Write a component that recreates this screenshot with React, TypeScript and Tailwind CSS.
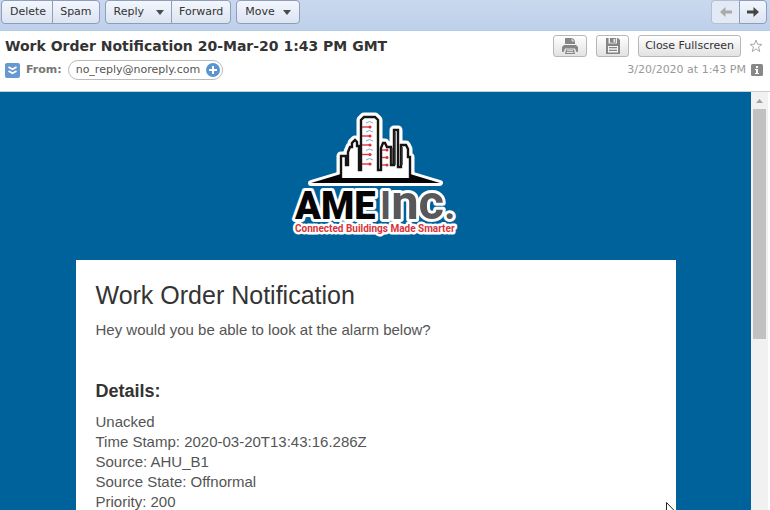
import { ReactNode } from "react"

const details = [
  "Unacked",
  "Time Stamp: 2020-03-20T13:43:16.286Z",
  "Source: AHU_B1",
  "Source State: Offnormal",
  "Priority: 200",
]

const skyline =
  "M50 68V46H55V55H57V42L59 37H61V33L64 30L66 32V36H68V60H70V10L73 7H84L87 10V60H90V38L92 33H94L96 37H100V55H103V20H107V57H110V35H115L117 39V47H119V68"
const base = "M20 73L50 64V68H119V64L149 73Z"

function ToolButton({ children, className = "" }: { children: ReactNode; className?: string }) {
  return (
    <button
      type="button"
      className={`flex h-6 items-center border border-[#8d9dbb] bg-linear-to-b from-[#f3f7fd] to-[#dce4f2] ${className}`}
    >
      {children}
    </button>
  )
}

function GreyButton({ children, label, className = "" }: { children: ReactNode; label?: string; className?: string }) {
  return (
    <button
      type="button"
      aria-label={label}
      className={`flex h-[22px] items-center justify-center rounded-[3px] border border-[#b8b8b8] bg-linear-to-b from-white to-[#e2e2e2] text-[#333] ${className}`}
    >
      {children}
    </button>
  )
}

function Caret() {
  return (
    <svg width="8" height="5" viewBox="0 0 8 5" aria-hidden="true">
      <path d="M0 0H8L4 5Z" fill="#4a4a4a" />
    </svg>
  )
}

function Arrow({ className }: { className: string }) {
  return (
    <svg width="12" height="10" viewBox="0 0 12 10" aria-hidden="true" className={className}>
      <path d="M0 3.5H6.5V0L12 5L6.5 10V6.5H0Z" fill="currentColor" />
    </svg>
  )
}

function Toolbar() {
  return (
    <div className="flex h-[31px] shrink-0 justify-between border-b border-[#b7cce8] bg-linear-to-b from-[#cad8ee] to-[#bed0ea] pr-[3px] pl-px">
      <div className="flex gap-[5px]">
        <div className="flex">
          <ToolButton className="rounded-l-sm pr-1.5 pl-2">Delete</ToolButton>
          <ToolButton className="-ml-px rounded-r-sm px-[7px]">Spam</ToolButton>
        </div>
        <div className="flex">
          <ToolButton className="gap-3 rounded-l-sm pr-[7px] pl-2">
            Reply <Caret />
          </ToolButton>
          <ToolButton className="-ml-px rounded-r-sm px-[7px]">Forward</ToolButton>
        </div>
        <ToolButton className="gap-2 rounded-sm px-2">
          Move <Caret />
        </ToolButton>
      </div>
      <div className="flex">
        <button
          type="button"
          aria-label="Previous message"
          className="flex h-6 w-7 items-center justify-center rounded-l-sm border border-r-0 border-[#b4bfd3] bg-[#e3eaf6]"
        >
          <Arrow className="rotate-180 text-[#aaa]" />
        </button>
        <button
          type="button"
          aria-label="Next message"
          className="flex h-6 w-7 items-center justify-center rounded-r-sm border border-[#8d9dbb] bg-linear-to-b from-[#f3f7fd] to-[#dce4f2]"
        >
          <Arrow className="text-[#444]" />
        </button>
      </div>
    </div>
  )
}

function MessageHeader() {
  return (
    <header className="shrink-0 border-b border-[#c8ced6] bg-white pt-1 pr-[7px] pb-[11px] pl-[5px]">
      <div className="flex h-[22px] items-center justify-between">
        <h1 className="text-sm font-bold text-[#333]">Work Order Notification 20-Mar-20 1:43 PM GMT</h1>
        <div className="flex items-center">
          <GreyButton label="Print" className="mr-[9px] w-[34px]">
            <svg width="16" height="16" viewBox="0 0 16 16" fill="#858585" aria-hidden="true">
              <path d="M3 0H10.5L13 2.5V6H3Z" />
              <path d="M10 0.5V3H12.5" fill="none" stroke="#fff" strokeWidth="0.8" />
              <path d="M2 7H14L16 9V14H14.5L13 10.5H3L1.5 14H0V9Z" />
              <path d="M4 11.5H12L13 16H3Z" />
              <path d="M5 12.7H11M4.5 14.5H11.5" stroke="#fff" strokeWidth="0.8" />
            </svg>
          </GreyButton>
          <GreyButton label="Save" className="mr-[9px] w-[33px]">
            <svg width="16" height="16" viewBox="0 0 16 16" fill="#858585" aria-hidden="true">
              <path d="M1 0H13L15 2V16H1Z" />
              <path d="M3.5 0V5.5H12V0" fill="#eee" />
              <path d="M5 0H10.8V4.7H5Z" />
              <path d="M8.5 1H10V4H8.5Z" fill="#eee" />
              <path d="M3 8H13V14.5H3Z" fill="#f5f5f5" />
              <path d="M4 9.7H12M4 12.3H12" stroke="#858585" strokeWidth="1.2" />
            </svg>
          </GreyButton>
          <GreyButton className="px-1.5">Close Fullscreen</GreyButton>
          <button type="button" aria-label="Flag message" className="ml-2">
            <svg width="14" height="14" viewBox="0 0 14 14" aria-hidden="true">
              <path
                d="M7 1L8.6 5.3H13L9.5 8L10.8 12.6L7 9.9L3.2 12.6L4.5 8L1 5.3H5.4Z"
                fill="#fff"
                stroke="#aaa"
              />
            </svg>
          </button>
        </div>
      </div>
      <div className="mt-[3px] flex items-center justify-between">
        <div className="flex items-center">
          <button type="button" aria-label="Expand header" className="size-[15px] rounded-xs bg-[#6699cf]">
            <svg width="15" height="15" viewBox="0 0 15 15" fill="none" stroke="#fff" strokeWidth="1.7" aria-hidden="true">
              <path d="M3.5 4L7.5 6.3L11.5 4M3.5 8L7.5 10.3L11.5 8" />
            </svg>
          </button>
          <span className="ml-1.5 font-bold text-[#777]">From:</span>
          <button
            type="button"
            className="ml-1.5 flex h-5 items-center gap-1.5 rounded-full border border-[#bbb] bg-white pr-0.5 pl-[7px] text-[#555]"
          >
            no_reply@noreply.com
            <svg width="14" height="14" viewBox="0 0 14 14" aria-hidden="true">
              <circle cx="7" cy="7" r="7" fill="#5b94d0" />
              <path d="M7 3V11M3 7H11" stroke="#fff" strokeWidth="2" />
            </svg>
          </button>
        </div>
        <div className="flex items-center gap-[5px] text-[#999]">
          <time dateTime="2020-03-20T13:43">3/20/2020 at 1:43 PM</time>
          <svg width="12" height="12" viewBox="0 0 12 12" aria-hidden="true">
            <rect width="12" height="12" rx="1.5" fill="#888" />
            <path d="M5 2H7V4H5ZM4 5H7V9H8V10H4V9H5V6H4Z" fill="#fff" />
          </svg>
        </div>
      </div>
    </header>
  )
}

function Logo() {
  return (
    <svg width="170" height="130" viewBox="0 0 170 130" role="img" aria-label="AME Inc." className="mx-auto block">
      <g fill="#fff" stroke="#fff" strokeWidth="9" strokeLinejoin="round">
        <path d={skyline} />
        <path d={base} strokeWidth="6" />
      </g>
      <path d={skyline} fill="#fff" stroke="#151515" strokeWidth="2.4" />
      <path d="M104 22V55M111 37V55M101 38V54" stroke="#333" strokeWidth="1.4" />
      <path d={base} fill="#050505" />
      {[17, 26, 35, 44.5, 54].map((y) => (
        <g key={y}>
          <path d={`M75 ${y - 4}Q78.500 ${y - 7} 82 ${y - 4}`} fill="none" stroke="#7fa9c9" />
          <path d={`M71 ${y}H79`} stroke="#d9343b" strokeWidth="1.4" />
          <circle cx="79" cy={y} r="1.6" fill="#d9343b" />
        </g>
      ))}
      {[40, 47.5, 55].map((y) => (
        <g key={y}>
          <path d={`M91 ${y}H96`} stroke="#d9343b" strokeWidth="1.4" />
          <circle cx="96" cy={y} r="1.5" fill="#d9343b" />
        </g>
      ))}
      {/* white halo is painted under the letters */}
      <g
        fontFamily="Roboto, sans-serif"
        fontWeight="700"
        stroke="#fff"
        strokeWidth="6"
        strokeLinejoin="round"
        paintOrder="stroke"
      >
        <text x="89" y="109" fontSize="38" fill="#58585a">
          I<tspan fontSize="49">nc</tspan>.
        </text>
        <text x="4" y="109" fontSize="38" fontWeight="900" fill="#050505">
          AME
        </text>
        <text x="4" y="122" fontSize="10" strokeWidth="5" fill="#d9343b">
          Connected Buildings Made Smarter
        </text>
      </g>
    </svg>
  )
}

function Scrollbar() {
  return (
    <div className="mr-0.5 w-[17px] shrink-0 bg-[#f1f1f1] px-0.5" aria-hidden="true">
      <div className="flex h-[17px] items-center justify-center">
        <svg width="7" height="4" viewBox="0 0 7 4">
          <path d="M0 4L3.5 0L7 4Z" fill="#a3a3a3" />
        </svg>
      </div>
      <div className="h-[55%] bg-[#c1c1c1]" />
    </div>
  )
}

export default function App() {
  return (
    <div className="relative flex h-screen flex-col overflow-hidden bg-white font-['DejaVu_Sans',Verdana,sans-serif] text-[11px] text-[#333]">
      <Toolbar />
      <MessageHeader />
      <main className="flex min-h-0 flex-1">
        <div className="min-w-0 flex-1 overflow-hidden bg-[#00629b] pt-[18px] font-['Liberation_Sans',Arial,sans-serif]">
          <Logo />
          <article className="mx-auto mt-5 max-w-[600px] bg-white px-5 pt-5 pb-10 text-[15px] leading-5 text-[#555]">
            <h2 className="text-[25px] leading-[30px] text-[#333]">Work Order Notification</h2>
            <p className="mt-2.5">Hey would you be able to look at the alarm below?</p>
            <h3 className="mt-10 text-lg leading-[22px] font-bold text-[#333]">Details:</h3>
            <ul className="mt-2.5">
              {details.map((line) => (
                <li key={line}>{line}</li>
              ))}
            </ul>
          </article>
        </div>
        <Scrollbar />
      </main>
      {/* mouse pointer, cut off by the window edge */}
      <svg
        width="12"
        height="18"
        viewBox="0 0 12 18"
        aria-hidden="true"
        className="absolute right-[92px] -bottom-[10px]"
      >
        <path d="M0.500 0.500V15.500L4 12L6.500 17.500L8.500 16.500L6 11.500H11Z" fill="#fff" stroke="#222" />
      </svg>
    </div>
  )
}
